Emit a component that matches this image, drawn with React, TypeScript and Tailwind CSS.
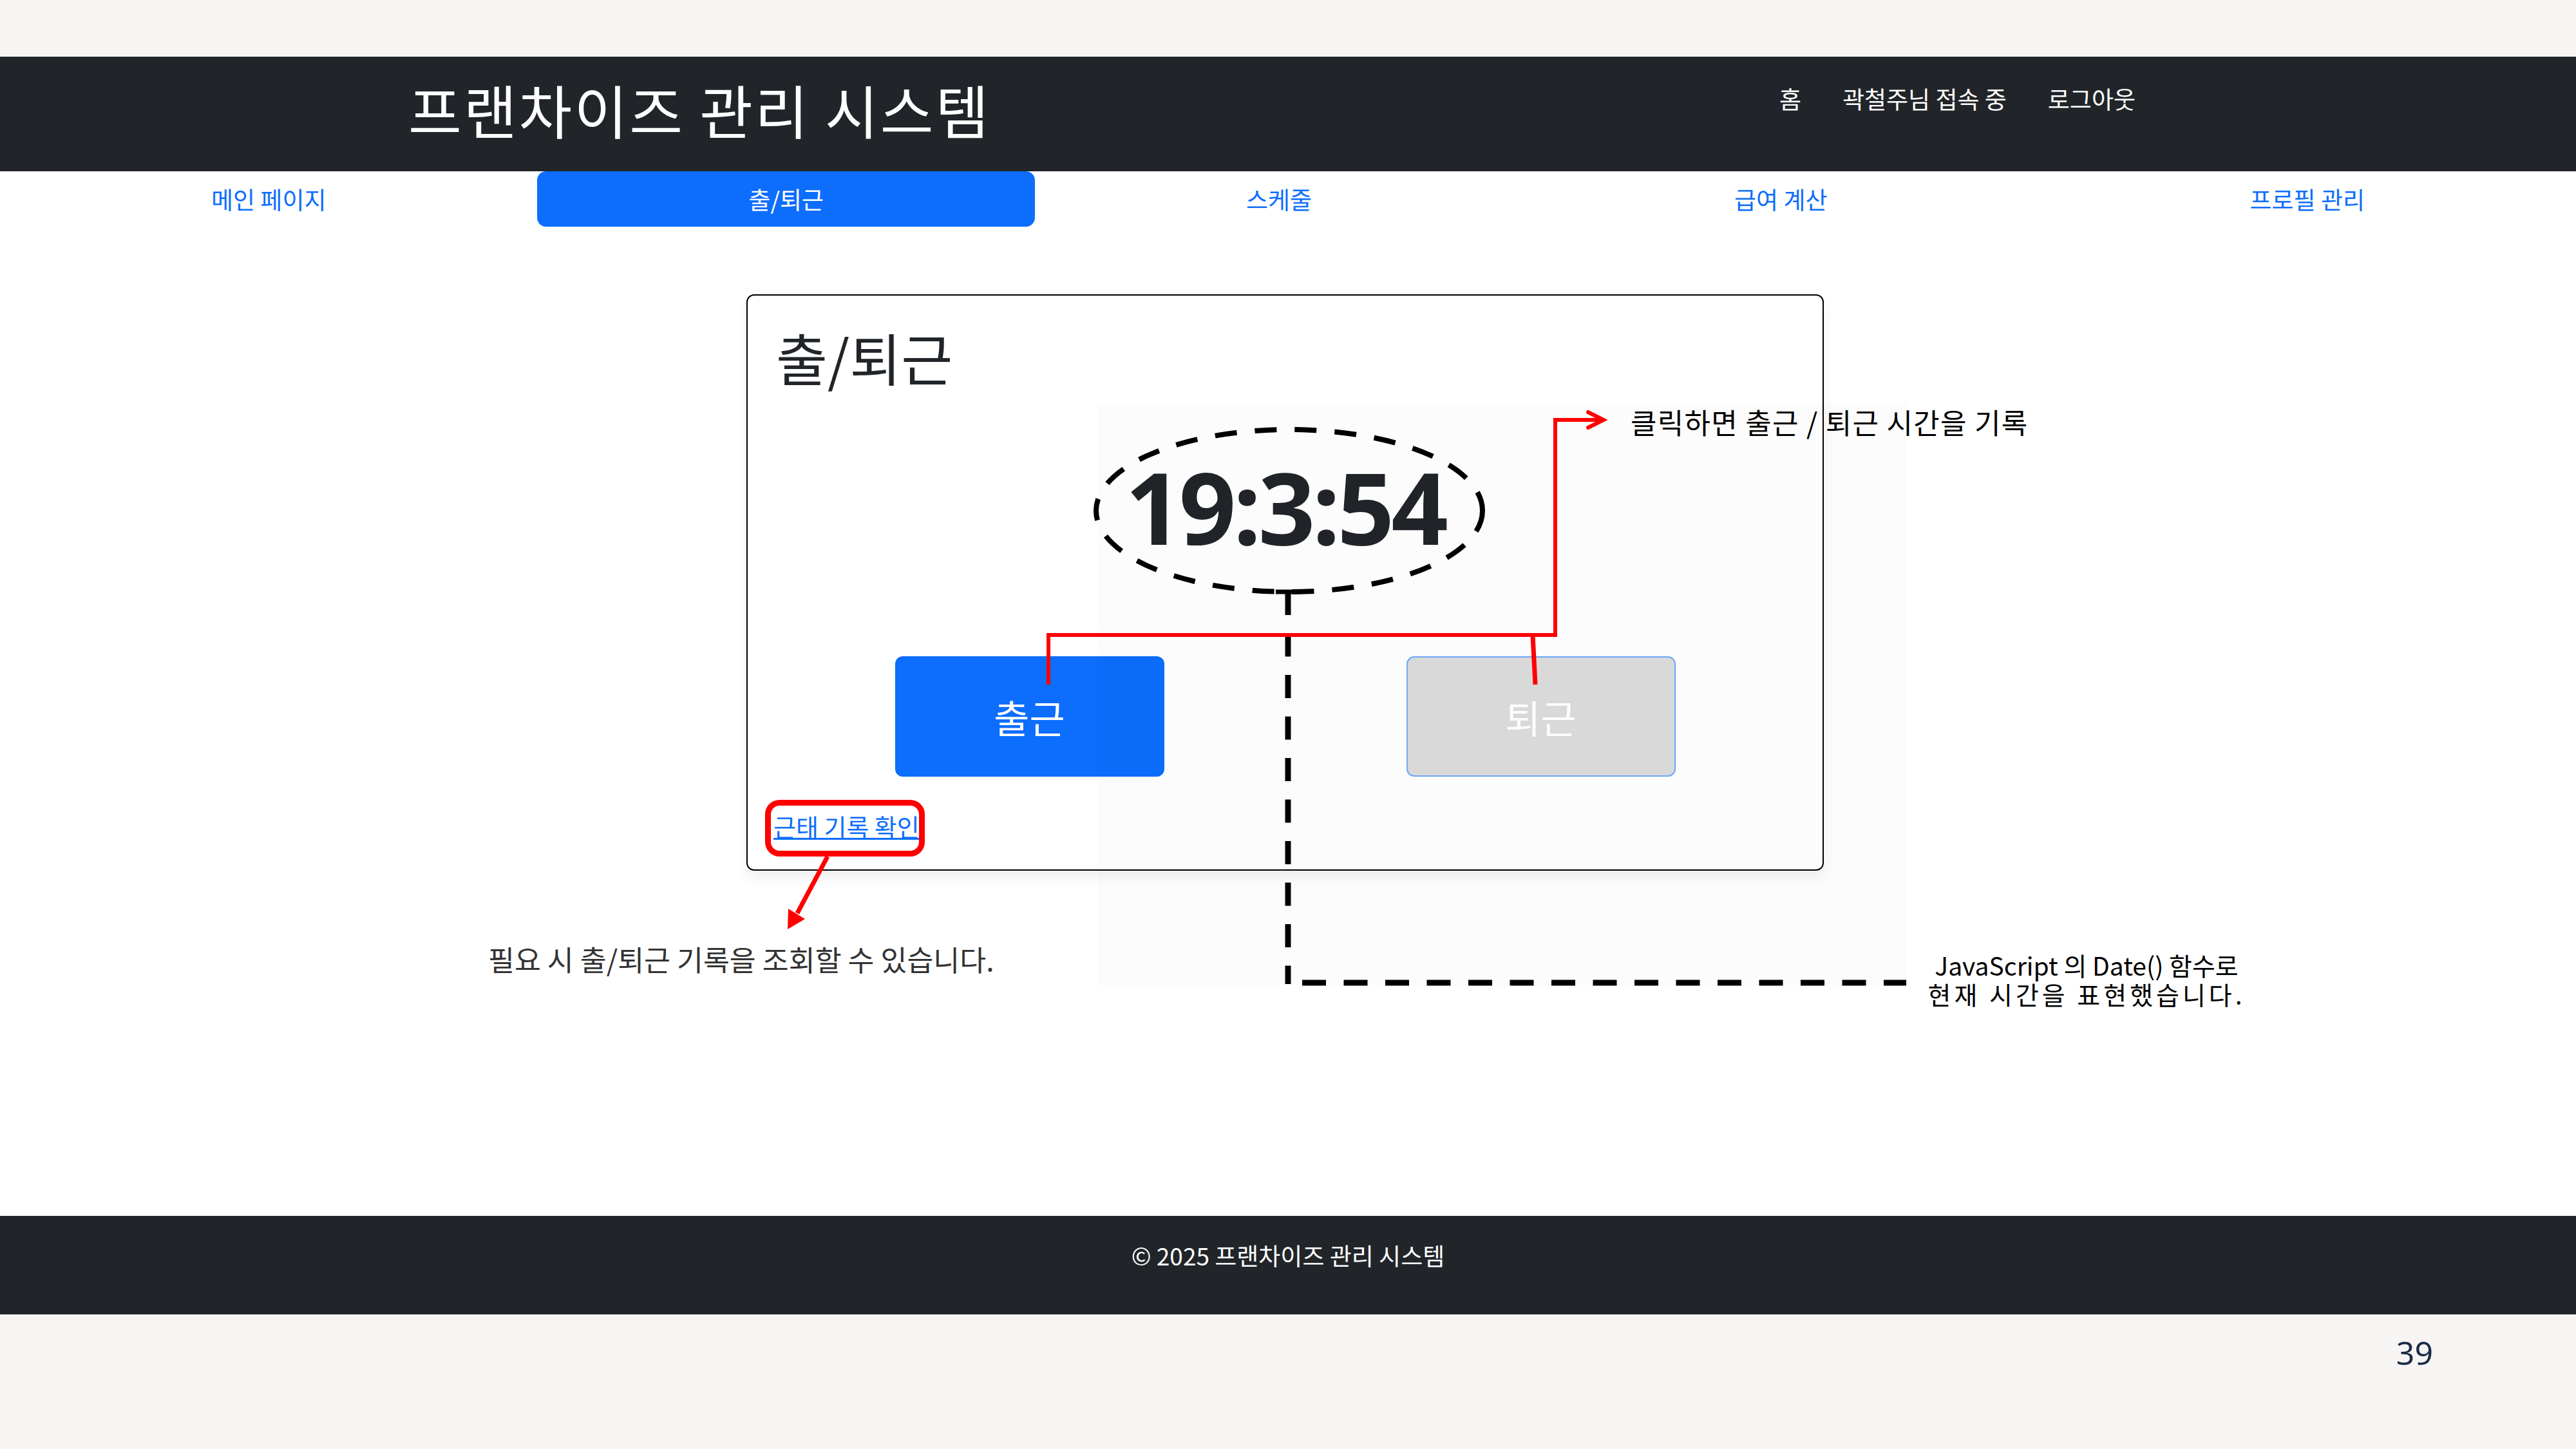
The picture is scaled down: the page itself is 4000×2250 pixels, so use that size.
import React from 'react';

const tabs = ['메인 페이지', '출/퇴근', '스케줄', '급여 계산', '프로필 관리'];

function Annotations() {
    return (
        <svg
            className="pointer-events-none absolute left-0 top-0"
            width={4000}
            height={2250}
            viewBox="0 0 4000 2250"
        >
            {/* clock highlight */}
            <ellipse cx={2002} cy={793} rx={300} ry={126} fill="none" stroke="#000" strokeWidth={8} strokeDasharray="34 28" />
            <line x1={1981} y1={919} x2={2019} y2={919} stroke="#000" strokeWidth={7} />
            <line x1={2000} y1={919} x2={2000} y2={1528} stroke="#000" strokeWidth={9} strokeDasharray="36 28.5" />
            <line x1={2022} y1={1526} x2={2960} y2={1526} stroke="#000" strokeWidth={9} strokeDasharray="37 27.5" />

            {/* buttons -> caption */}
            <polyline
                points="1628,1063 1628,986 2415,986 2415,652 2488,652"
                fill="none"
                stroke="#ff0000"
                strokeWidth={6}
            />
            <polyline points="2466,640 2490,652 2466,664" fill="none" stroke="#ff0000" strokeWidth={6} strokeLinecap="round" />
            <line x1={2380} y1={986} x2={2384} y2={1063} stroke="#ff0000" strokeWidth={7} />

            {/* link highlight */}
            <rect x={1192.5} y={1246.5} width={239} height={79} rx={18} fill="none" stroke="#ff0000" strokeWidth={9} />
            <line x1={1285} y1={1330} x2={1238} y2={1418} stroke="#ff0000" strokeWidth={7} />
            <polygon points="1223,1443 1250,1427 1224,1411" fill="#ff0000" />
        </svg>
    );
}

export default function App() {
    return (
        <div className="relative flex h-[2250px] w-[4000px] flex-col overflow-hidden bg-[#f6f5f3] font-['Noto_Sans_CJK_KR',sans-serif]">
            <div className="h-[88px] shrink-0" />

            <header className="flex h-[178px] shrink-0 bg-[#212529] text-white">
                <div className="pl-[634px] pt-[36px] text-[90px] leading-none tracking-[3px]">프랜차이즈 관리 시스템</div>
                <nav className="ml-auto mr-[684px] flex gap-[64px] pt-[47px] text-[37px] leading-none">
                    <span>홈</span>
                    <span>곽철주님 접속 중</span>
                    <span>로그아웃</span>
                </nav>
            </header>

            <nav className="flex h-[86px] shrink-0 bg-white text-[37px] leading-none">
                {tabs.map((t) => (
                    <div
                        key={t}
                        className={
                            t === '출/퇴근'
                                ? 'flex flex-auto items-center justify-center rounded-[14px] bg-[#0d6efd] px-[32px] text-white'
                                : 'flex flex-auto items-center justify-center px-[32px] text-[#0d6efd]'
                        }
                    >
                        {t}
                    </div>
                ))}
            </nav>

            <main className="h-[1536px] shrink-0 bg-white pt-[105px]">
                <div className="ml-[1159px] flex h-[895px] w-[1673px] flex-col rounded-[12px] border-2 border-black shadow-[0_12px_20px_rgba(0,0,0,0.06)]">
                    <h2 className="pl-[44px] pt-[52px] text-[87px] leading-none text-[#212529]">출/퇴근</h2>
                    <div className="mt-[110px] text-center font-['Open_Sans',sans-serif] text-[155px] font-bold leading-none tracking-[-5px] text-[#212529]">
                        19:3:54
                    </div>
                    <div className="mt-[156px] flex justify-center gap-[376px]">
                        <button className="flex h-[187px] w-[418px] items-center justify-center rounded-[12px] bg-[#0d6efd] text-[60px] leading-none text-white">
                            출근
                        </button>
                        <button className="flex h-[187px] w-[418px] items-center justify-center rounded-[12px] border-2 border-[#6ea8fe] bg-[#dcdcdc] text-[60px] leading-none text-white">
                            퇴근
                        </button>
                    </div>
                    <div className="mt-[58px] pl-[40px]">
                        <a className="text-[38px] leading-none text-[#0d6efd] underline">근태 기록 확인</a>
                    </div>
                </div>
            </main>

            <footer className="flex h-[153px] shrink-0 justify-center bg-[#212529] pt-[43px] text-[37px] leading-none text-white">
                © 2025 프랜차이즈 관리 시스템
            </footer>

            <div className="flex flex-1 justify-end pr-[222px] pt-[34px]">
                <span className="font-['Noto_Sans',sans-serif] text-[50px] leading-none text-[#1b2a47]">39</span>
            </div>

            {/* annotation layer */}
            <div className="pointer-events-none absolute left-[1704px] top-[627px] h-[903px] w-[1256px] bg-[rgba(0,0,0,0.012)]" />
            <Annotations />
            <div className="absolute left-[2532px] top-[633px] text-[44px] leading-none tracking-[1.3px] text-black">
                클릭하면 출근 / 퇴근 시간을 기록
            </div>
            <div className="absolute left-[758px] top-[1467px] text-[44.5px] leading-none text-[#333]">
                필요 시 출/퇴근 기록을 조회할 수 있습니다.
            </div>
            <div className="absolute left-[2990px] top-[1479px] flex w-[500px] flex-col items-center gap-[6px] text-[39px] leading-none text-black">
                <span>JavaScript 의 Date() 함수로</span>
                <span className="tracking-[5px]">현재 시간을 표현했습니다.</span>
            </div>
        </div>
    );
}
